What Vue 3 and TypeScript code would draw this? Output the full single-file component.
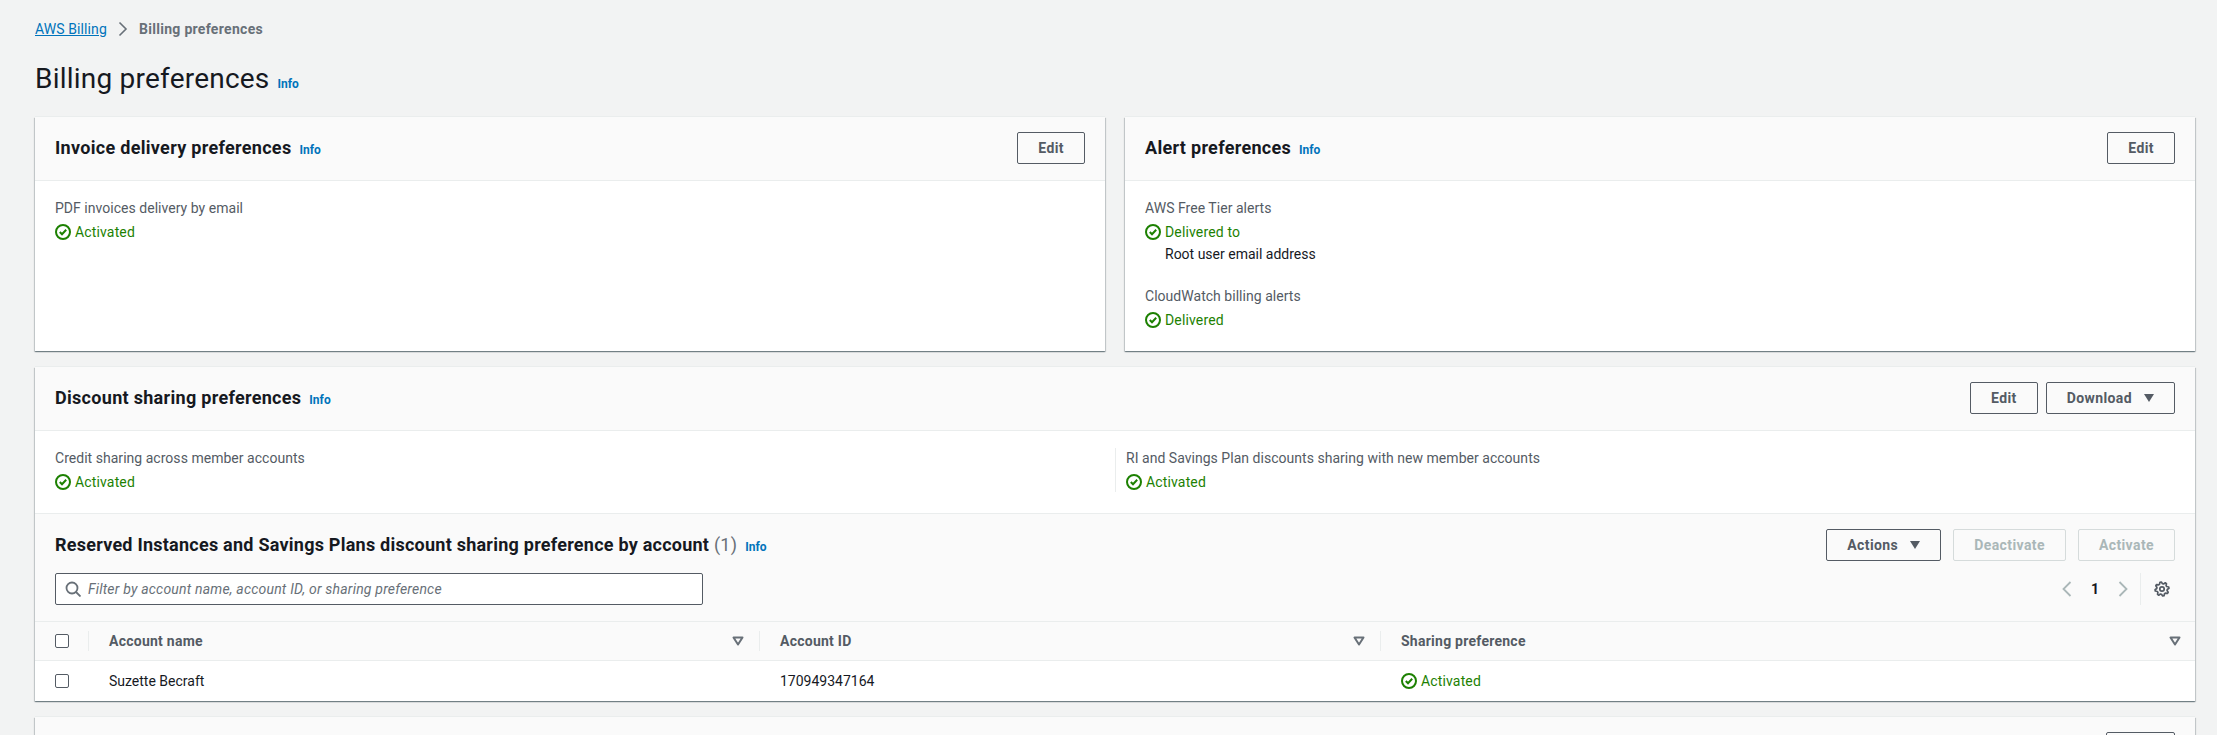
<script setup lang="ts">
interface Row {
  name: string;
  id: string;
  preference: string;
}

const rows: Row[] = [{ name: 'Suzette Becraft', id: '170949347164', preference: 'Activated' }];

const columns = ['Account name', 'Account ID', 'Sharing preference'];

// 8 tooth gear outline for the table settings icon
const gearPoints = Array.from({ length: 32 }, (_, i) => {
  const angle = ((i - 1.5) * Math.PI) / 16;
  const radius = i % 4 === 0 || i % 4 === 1 ? 7 : 5.3;
  return `${(8 + radius * Math.cos(angle)).toFixed(2)},${(8 + radius * Math.sin(angle)).toFixed(2)}`;
}).join(' ');
</script>

<template>
  <div class="page">
    <nav class="crumbs">
      <a class="crumb-link">AWS Billing</a>
      <svg class="crumb-sep" viewBox="0 0 16 16"><path d="M4.5 1.5L11 8l-6.5 6.5" /></svg>
      <span class="crumb-current">Billing preferences</span>
    </nav>

    <div class="page-title">
      <h1>Billing preferences</h1>
      <a class="info">Info</a>
    </div>

    <div class="top-grid">
      <section class="card">
        <header class="card-head">
          <div class="head-title">
            <h2>Invoice delivery preferences</h2>
            <a class="info">Info</a>
          </div>
          <button class="btn">Edit</button>
        </header>
        <div class="card-body">
          <div class="label">PDF invoices delivery by email</div>
          <div class="status">
            <svg class="check" viewBox="0 0 16 16"><circle cx="8" cy="8" r="7" /><path d="M4.8 8l2.2 2.2 4.2-4.4" /></svg>
            Activated
          </div>
        </div>
      </section>

      <section class="card">
        <header class="card-head">
          <div class="head-title">
            <h2>Alert preferences</h2>
            <a class="info">Info</a>
          </div>
          <button class="btn">Edit</button>
        </header>
        <div class="card-body">
          <div class="label">AWS Free Tier alerts</div>
          <div class="status">
            <svg class="check" viewBox="0 0 16 16"><circle cx="8" cy="8" r="7" /><path d="M4.8 8l2.2 2.2 4.2-4.4" /></svg>
            Delivered to
          </div>
          <div class="status-note">Root user email address</div>
          <div class="label second">CloudWatch billing alerts</div>
          <div class="status">
            <svg class="check" viewBox="0 0 16 16"><circle cx="8" cy="8" r="7" /><path d="M4.8 8l2.2 2.2 4.2-4.4" /></svg>
            Delivered
          </div>
        </div>
      </section>
    </div>

    <section class="card discount">
      <header class="card-head">
        <div class="head-title">
          <h2>Discount sharing preferences</h2>
          <a class="info">Info</a>
        </div>
        <div class="head-actions">
          <button class="btn">Edit</button>
          <button class="btn">
            Download
            <svg class="caret" viewBox="0 0 10 8"><path d="M0 0h10L5 8z" /></svg>
          </button>
        </div>
      </header>

      <div class="sharing">
        <div>
          <div class="label">Credit sharing across member accounts</div>
          <div class="status">
            <svg class="check" viewBox="0 0 16 16"><circle cx="8" cy="8" r="7" /><path d="M4.8 8l2.2 2.2 4.2-4.4" /></svg>
            Activated
          </div>
        </div>
        <div class="sharing-right">
          <div class="label">RI and Savings Plan discounts sharing with new member accounts</div>
          <div class="status">
            <svg class="check" viewBox="0 0 16 16"><circle cx="8" cy="8" r="7" /><path d="M4.8 8l2.2 2.2 4.2-4.4" /></svg>
            Activated
          </div>
        </div>
      </div>

      <div class="table-head">
        <div class="table-row">
          <div class="head-title">
            <h2 class="table-title">Reserved Instances and Savings Plans discount sharing preference by account <span class="count">(1)</span></h2>
            <a class="info">Info</a>
          </div>
          <div class="table-actions">
            <button class="btn">
              Actions
              <svg class="caret" viewBox="0 0 10 8"><path d="M0 0h10L5 8z" /></svg>
            </button>
            <button class="btn" disabled>Deactivate</button>
            <button class="btn" disabled>Activate</button>
          </div>
        </div>
        <div class="table-row">
          <label class="search">
            <svg class="search-icon" viewBox="0 0 16 16"><circle cx="7" cy="7" r="5.5" /><path d="M11 11l4.5 4.5" /></svg>
            <input placeholder="Filter by account name, account ID, or sharing preference" />
          </label>
          <div class="pager">
            <svg class="pager-arrow" viewBox="0 0 16 16"><path d="M11.5 1L4.5 8l7 7" /></svg>
            <span class="pager-num">1</span>
            <svg class="pager-arrow" viewBox="0 0 16 16"><path d="M4.5 1l7 7-7 7" /></svg>
            <span class="pager-gear">
              <svg class="gear" viewBox="0 0 16 16"><polygon :points="gearPoints" /><circle cx="8" cy="8" r="2.2" /></svg>
            </span>
          </div>
        </div>
      </div>

      <table class="accounts">
        <colgroup>
          <col class="col-check" />
          <col class="col-name" />
          <col class="col-id" />
          <col />
        </colgroup>
        <thead>
          <tr>
            <th><div class="th-check"><span class="checkbox"></span></div></th>
            <th v-for="col in columns" :key="col">
              <div class="th-inner">
                {{ col }}
                <svg class="sort" viewBox="0 0 12 10"><path d="M1.5 1.5h9L6 8.5z" /></svg>
              </div>
            </th>
          </tr>
        </thead>
        <tbody>
          <tr v-for="row in rows" :key="row.id">
            <td><div class="td-check"><span class="checkbox"></span></div></td>
            <td class="cell">{{ row.name }}</td>
            <td class="cell">{{ row.id }}</td>
            <td class="cell">
              <div class="status">
                <svg class="check" viewBox="0 0 16 16"><circle cx="8" cy="8" r="7" /><path d="M4.8 8l2.2 2.2 4.2-4.4" /></svg>
                {{ row.preference }}
              </div>
            </td>
          </tr>
        </tbody>
      </table>
    </section>

    <section class="card discount">
      <header class="card-head end">
        <button class="btn peek"></button>
      </header>
    </section>
  </div>
</template>

<style>
html,
body {
  margin: 0;
  height: 735px;
  overflow: hidden;
  background: #f2f3f3;
}
</style>

<style scoped>
.page {
  padding: 19px 22px 0 35px;
  font-family: Roboto, "Liberation Sans", sans-serif;
  font-size: 14px;
  line-height: 20px;
  color: #16191f;
}

.crumbs {
  display: flex;
  align-items: center;
  height: 20px;
}

.crumb-link {
  color: #0073bb;
  letter-spacing: 0.1px;
  text-decoration: underline;
}

.crumb-sep {
  width: 16px;
  height: 16px;
  margin: 0 8px;
  fill: none;
  stroke: #687078;
  stroke-width: 1.6;
}

.crumb-current {
  color: #687078;
  font-weight: 700;
  letter-spacing: 0.3px;
}

.page-title {
  display: flex;
  align-items: baseline;
  gap: 8px;
  margin-top: 22px;
  height: 36px;
}

h1 {
  margin: 0;
  font-size: 28px;
  line-height: 36px;
  font-weight: 400;
  letter-spacing: 0.22px;
}

h2 {
  margin: 0;
  font-size: 18px;
  line-height: 22px;
  font-weight: 700;
  letter-spacing: 0.3px;
}

h2.table-title {
  letter-spacing: 0.24px;
}

.count {
  font-weight: 400;
  color: #687078;
}

.info {
  color: #0073bb;
  font-size: 12px;
  font-weight: 700;
}

.top-grid {
  display: grid;
  grid-template-columns: 1fr 1fr;
  gap: 20px;
  margin-top: 20px;
}

.card {
  background: #fff;
  box-shadow: 0 1px 1px 0 rgba(0, 28, 36, 0.35), 1px 1px 1px 0 rgba(0, 28, 36, 0.15), -1px 1px 1px 0 rgba(0, 28, 36, 0.15), 0 -1px 0 0 #eaeded;
}

.discount {
  margin-top: 16px;
}

.card-head {
  display: flex;
  justify-content: space-between;
  align-items: center;
  padding: 15px 20px 16px;
  background: #fafafa;
  border-bottom: 1px solid #eaeded;
}

.card-head.end {
  justify-content: flex-end;
}

.head-title {
  display: flex;
  align-items: baseline;
  gap: 8px;
}

.head-actions {
  display: flex;
  gap: 8px;
}

.btn {
  display: inline-flex;
  align-items: center;
  justify-content: center;
  gap: 12px;
  box-sizing: border-box;
  height: 32px;
  padding: 0 20px 0 20px;
  background: transparent;
  border: 1px solid #545b64;
  border-radius: 2px;
  font-family: inherit;
  font-size: 14px;
  font-weight: 700;
  letter-spacing: 0.4px;
  color: #545b64;
}

.btn:disabled {
  border-color: #d5dbdb;
  color: #aab7b8;
}

.peek {
  width: 69px;
}

.caret {
  width: 10px;
  height: 8px;
  fill: #545b64;
}

.card-body {
  height: 153px;
  padding: 17px 20px 0;
}

.label {
  color: #545b64;
  letter-spacing: 0.03px;
}

.label.second {
  margin-top: 22px;
}

.status {
  display: flex;
  align-items: center;
  gap: 4px;
  margin-top: 4px;
  color: #1d8102;
  letter-spacing: 0.15px;
}

.check {
  width: 16px;
  height: 16px;
  fill: none;
  stroke: #1d8102;
  stroke-width: 2;
}

.status-note {
  margin-top: 2px;
  padding-left: 20px;
}

.sharing {
  display: grid;
  grid-template-columns: 1fr 1fr;
  padding: 17px 20px 21px;
  background: #fff;
}

.sharing-right {
  padding-left: 10px;
  border-left: 1px solid #eaeded;
}

.table-head {
  padding: 15px 20px 16px;
  background: #fafafa;
  border-top: 1px solid #eaeded;
  border-bottom: 1px solid #eaeded;
}

.table-row {
  display: flex;
  justify-content: space-between;
  align-items: center;
}

.table-row + .table-row {
  margin-top: 12px;
}

.table-actions {
  display: flex;
  gap: 12px;
}

.search {
  display: flex;
  align-items: center;
  gap: 7px;
  box-sizing: border-box;
  width: 648px;
  height: 32px;
  padding: 0 9px;
  background: #fff;
  border: 1px solid #545b64;
  border-radius: 2px;
}

.search-icon {
  flex: none;
  width: 16px;
  height: 16px;
  fill: none;
  stroke: #687078;
  stroke-width: 1.8;
}

.search input {
  flex: 1;
  padding: 0;
  border: none;
  outline: none;
  background: transparent;
  font-family: inherit;
  font-size: 14px;
  letter-spacing: 0.2px;
}

.search input::placeholder {
  color: #687078;
  font-style: italic;
  opacity: 1;
}

.pager {
  display: flex;
  align-items: center;
  height: 32px;
}

.pager-arrow {
  width: 16px;
  height: 16px;
  fill: none;
  stroke: #aab7b8;
  stroke-width: 1.8;
}

.pager-num {
  width: 40px;
  text-align: center;
  font-weight: 700;
}

.pager-gear {
  display: flex;
  align-items: center;
  height: 32px;
  margin-left: 9px;
  padding: 0 5px 0 13px;
  border-left: 1px solid #eaeded;
}

.gear {
  width: 16px;
  height: 16px;
  overflow: visible;
  fill: none;
  stroke: #545b64;
  stroke-width: 1.7;
  stroke-linejoin: round;
}

.accounts {
  width: 100%;
  table-layout: fixed;
  border-collapse: separate;
  border-spacing: 0;
}

.col-check {
  width: 54px;
}

.col-name {
  width: 671px;
}

.col-id {
  width: 621px;
}

th {
  box-sizing: border-box;
  height: 39px;
  padding: 0;
  background: #fafafa;
  border-bottom: 1px solid #eaeded;
  text-align: left;
  font-weight: 700;
  letter-spacing: 0.25px;
  color: #545b64;
}

.th-check {
  display: flex;
  align-items: center;
  height: 20px;
  padding-left: 20px;
  border-right: 1px solid #eaeded;
}

.th-inner {
  display: flex;
  justify-content: space-between;
  align-items: center;
  height: 20px;
  padding: 0 15px 0 20px;
  border-right: 1px solid #eaeded;
}

th:last-child .th-inner {
  border-right: none;
  padding-right: 14px;
}

.sort {
  width: 12px;
  height: 10px;
  fill: none;
  stroke: #687078;
  stroke-width: 2;
  stroke-linejoin: round;
}

.checkbox {
  display: block;
  box-sizing: border-box;
  width: 14px;
  height: 14px;
  background: #fff;
  border: 1px solid #545b64;
  border-radius: 2px;
}

td {
  height: 40px;
  padding: 0;
}

.td-check {
  padding-left: 20px;
}

.cell {
  padding-left: 20px;
}

.cell .status {
  margin-top: 0;
}
</style>
